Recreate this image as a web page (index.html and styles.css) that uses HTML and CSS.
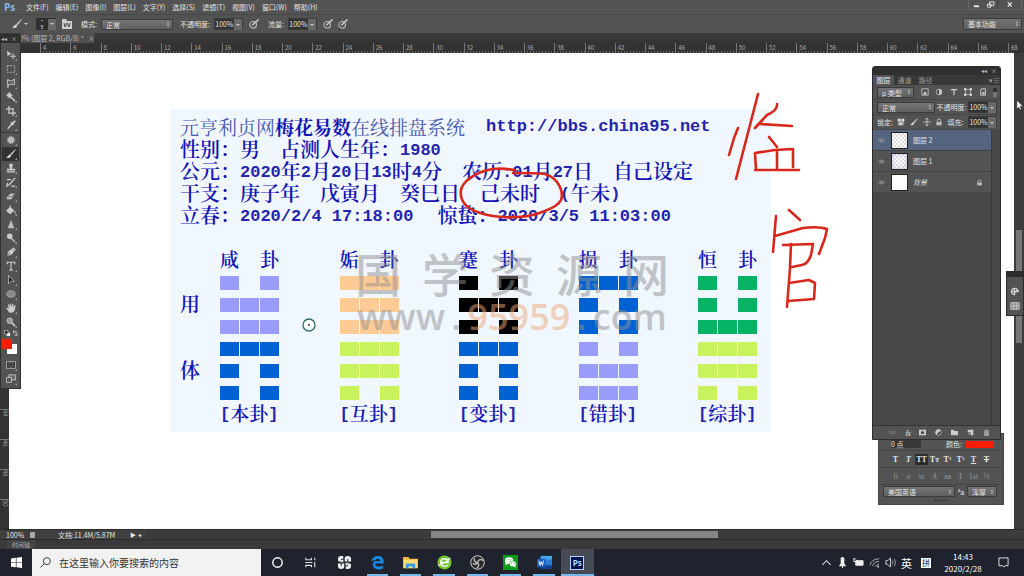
FILE: index.html
```html
<!DOCTYPE html>
<html lang="zh-CN">
<head>
<meta charset="utf-8">
<title>图层 2</title>
<link rel="stylesheet" href="styles.css">
</head>
<body>
<svg class="defs" aria-hidden="true">
  <symbol id="brush" viewBox="0 0 12 12"><path d="M11.5.5 5.5 6l1 1.2z" fill="#ddd" stroke="#ddd" stroke-width=".6"/><path d="M5 6.500c-2 0-2 2-4.500 4 3 .7 5.500 0 5.800-2.600z" fill="#ddd"/></symbol>
  <symbol id="eye" viewBox="0 0 12 12"><path d="M.5 6Q6 .5 11.500 6 6 11.500.5 6z" fill="none" stroke="#999" stroke-width="1.200"/><circle cx="6" cy="6" r="2" fill="#999"/></symbol>
  <symbol id="lock" viewBox="0 0 12 12"><path d="M3.500 6V4a2.500 2.500 0 0 1 5 0v2" fill="none" stroke="#ccc" stroke-width="1.300"/><path d="M2 6h8v5H2z" fill="#bbb"/></symbol>
  <symbol id="pressure" viewBox="0 0 12 12"><circle cx="5" cy="7" r="4" fill="none" stroke="#bbb" stroke-width="1.300"/><path d="M11.500.5 4 7.500" stroke="#ccc" stroke-width="1.800"/></symbol>
</svg>

<header class="menubar">
  <span class="logo">Ps</span>
  <nav class="menus">
    <button>文件(F)</button><button>编辑(E)</button><button>图像(I)</button><button>图层(L)</button><button>文字(Y)</button><button>选择(S)</button><button>滤镜(T)</button><button>视图(V)</button><button>窗口(W)</button><button>帮助(H)</button>
  </nav>
  <div class="window-buttons">
    <button aria-label="最小化"><svg viewBox="0 0 10 8"><path d="M2 6h6" stroke="#eee" stroke-width="2"/></svg></button>
    <button aria-label="还原"><svg viewBox="0 0 10 8"><path d="M4 1h5v4H4zM1.500 3.500h4v3.500h-4z" fill="#555" stroke="#eee"/></svg></button>
    <button aria-label="关闭"><svg viewBox="0 0 10 8"><path d="m3 1.500 4.500 5m0-5-4.500 5" stroke="#eee" stroke-width="1.300"/></svg></button>
  </div>
</header>

<div class="options">
  <button class="tool-preset" aria-label="画笔工具"><svg class="ico"><use href="#brush"/></svg><i class="caret"></i></button>
  <button class="size" aria-label="画笔大小"><b>•<br>5</b><i class="caret"></i></button>
  <button class="plain" aria-label="画笔面板"><svg class="ico" viewBox="0 0 10 10"><path d="M0 0h4l1 2h5v8H0z" fill="#ccc"/><path d="m2 4 1 4 2-4 2 4 1-4" fill="none" stroke="#444"/></svg></button>
  <label for="mode">模式:</label>
  <select id="mode" class="mode"><option>正常</option></select>
  <label for="opacity">不透明度:</label>
  <span class="combo"><input id="opacity" value="100%"><i class="caret"></i></span>
  <button class="plain" aria-label="不透明度压力"><svg class="ico"><use href="#pressure"/></svg></button>
  <label for="flow">流量:</label>
  <span class="combo"><input id="flow" value="100%"><i class="caret"></i></span>
  <button class="plain" aria-label="喷枪"><svg class="ico"><use href="#pressure"/></svg></button>
  <span class="rule"></span>
  <button class="plain" aria-label="大小压力"><svg class="ico"><use href="#pressure"/></svg></button>
  <select class="workspace-select" aria-label="工作区"><option>基本功能</option></select>
</div>

<div class="tabs"><button class="tab">0% (图层 2, RGB/8) *<span>×</span></button></div>

<div class="ruler">
  <span>4</span><span>6</span><span>8</span><span>10</span><span>12</span><span>14</span><span>16</span><span>18</span><span>20</span><span>22</span><span>24</span><span>26</span><span>28</span><span>30</span><span>32</span><span>34</span><span>36</span><span>38</span><span>40</span><span>42</span><span>44</span><span>46</span><span>48</span><span>50</span><span>52</span><span>54</span><span>56</span><span>58</span><span>60</span><span>62</span><span>64</span><span>66</span><span class="end">68</span><i></i>
</div>

<main class="editor">
  <div class="vruler"><span>42</span><span>44</span><span>46</span><span>48</span><span>50</span></div>
  <div class="canvas">
    <section class="sheet">
      <p class="title">元亨利贞网<b>梅花易数</b>在线排盘系统<a href="#">http://bbs.china95.net</a></p>
      <p><span>性别：男</span><span>占测人生年：<kbd>1980</kbd></span></p>
      <p><span>公元：<kbd>2020</kbd>年<kbd>2</kbd>月<kbd>20</kbd>日<kbd>13</kbd>时<kbd>4</kbd>分</span><span>农历<kbd>:01</kbd>月<kbd>27</kbd>日</span><span>自己设定</span></p>
      <p><span>干支：庚子年</span><span>戊寅月</span><span>癸巳日</span><span>己未时</span><span><kbd>(</kbd>午未<kbd>)</kbd></span></p>
      <p class="terms"><span>立春：<kbd>2020/2/4 17:18:00</kbd></span><span>惊蛰：<kbd>2020/3/5 11:03:00</kbd></span></p>
      <div class="chart">
        <div class="sides"><span>用</span><span>体</span></div>
        <div class="gua">
          <h2><span>咸</span><span>卦</span></h2>
          <div class="yao violet"><i></i><i></i></div><div class="yao violet"><i></i><i></i><i></i></div><div class="yao violet"><i></i><i></i><i></i></div>
          <div class="yao blue"><i></i><i></i><i></i></div><div class="yao blue"><i></i><i></i></div><div class="yao blue"><i></i><i></i></div>
          <footer><kbd>[</kbd>本卦<kbd>]</kbd></footer>
        </div>
        <div class="gua">
          <h2><span>姤</span><span>卦</span></h2>
          <div class="yao peach"><i></i><i></i><i></i></div><div class="yao peach"><i></i><i></i><i></i></div><div class="yao peach"><i></i><i></i><i></i></div>
          <div class="yao lime"><i></i><i></i><i></i></div><div class="yao lime"><i></i><i></i><i></i></div><div class="yao lime"><i></i><i></i></div>
          <footer><kbd>[</kbd>互卦<kbd>]</kbd></footer>
        </div>
        <div class="gua">
          <h2><span>蹇</span><span>卦</span></h2>
          <div class="yao black"><i></i><i></i></div><div class="yao black"><i></i><i></i><i></i></div><div class="yao black"><i></i><i></i></div>
          <div class="yao blue"><i></i><i></i><i></i></div><div class="yao blue"><i></i><i></i></div><div class="yao blue"><i></i><i></i></div>
          <footer><kbd>[</kbd>变卦<kbd>]</kbd></footer>
        </div>
        <div class="gua">
          <h2><span>损</span><span>卦</span></h2>
          <div class="yao blue"><i></i><i></i><i></i></div><div class="yao blue"><i></i><i></i></div><div class="yao blue"><i></i><i></i></div>
          <div class="yao violet"><i></i><i></i></div><div class="yao violet"><i></i><i></i><i></i></div><div class="yao violet"><i></i><i></i><i></i></div>
          <footer><kbd>[</kbd>错卦<kbd>]</kbd></footer>
        </div>
        <div class="gua">
          <h2><span>恒</span><span>卦</span></h2>
          <div class="yao green"><i></i><i></i></div><div class="yao green"><i></i><i></i></div><div class="yao green"><i></i><i></i><i></i></div>
          <div class="yao lime"><i></i><i></i><i></i></div><div class="yao lime"><i></i><i></i><i></i></div><div class="yao lime"><i></i><i></i></div>
          <footer><kbd>[</kbd>综卦<kbd>]</kbd></footer>
        </div>
      </div>
      <div class="watermark"><div class="wm-name"><span>国</span><span>学</span><span>资</span><span>源</span><span>网</span></div><div class="wm-url"><span>www</span><span>.</span><em>95959</em><span>.</span><span>com</span></div></div>
      <svg class="ink" viewBox="170 109 601 323" aria-hidden="true">
        <g fill="none" stroke="#d8281c" stroke-width="2.600" stroke-linecap="round" stroke-linejoin="round">
          <path d="M515 170Q503 168 493 169 480 171 470 178 462 184 461 190 460 198 464 203 470 212 493 216 505 218 517 217 530 217 545 211 558 206 561 200 564 192 557 182 552 176 545 174 535 173 513 173"/>
          <path d="m738 128-4 10-5 17M758 94 736 179M777 104q1 6-10 11l-12 13M760 124l32 2M769 137l8 10M755 153l1 17M755 153l20-3 18-1 0 18M777 150v18M755 170h44"/>
          <path d="m789 210 11 10M776 216l-3 36M775 236l28-8q16-2 24 1l-2 9-6 16M791 244l-1 24-3 39M783 245l30-1-2 11q-3 9-9 10l-10 2M789 283l20-3 6 3-1 16-26 2"/>
        </g>
        <circle cx="309" cy="325" r="6" fill="#fff" stroke="#287068" stroke-width="1.300"/><circle cx="309" cy="325" r="1" fill="#333"/>
      </svg>
    </section>
  </div>
  <div class="vscroll"><i></i></div>

  <aside class="toolbox" aria-label="工具">
    <div class="box-head"><span>◂◂</span><span>×</span></div>
    <button aria-label="移动"><svg viewBox="0 0 12 12"><path d="m1 1 6 4-3 .5L2 8z" fill="#ccc"/><path d="M8.500 4v7M5 7.500h7" stroke="#ccc" stroke-width="1.200"/></svg></button>
    <button aria-label="选框"><svg viewBox="0 0 12 12"><path d="M1.500 2h9v8h-9z" fill="none" stroke="#ccc" stroke-dasharray="2 1.500"/></svg></button>
    <button aria-label="套索"><svg viewBox="0 0 12 12"><path d="m2 2 5 2 3-3v7L6 7l-4 2zM3 8l-1 4" fill="none" stroke="#ccc" stroke-width="1.200"/></svg></button>
    <button aria-label="魔棒"><svg viewBox="0 0 12 12"><circle cx="4" cy="4" r="2.700" fill="#ccc"/><path d="m5 5 6 6" stroke="#ccc" stroke-width="1.800"/><path d="M4 0v8M0 4h8" stroke="#ccc"/></svg></button>
    <button aria-label="裁剪"><svg viewBox="0 0 12 12"><path d="M3.500 0v8.500H12M0 3.500h8.500V12" fill="none" stroke="#ccc" stroke-width="1.500"/></svg></button>
    <button aria-label="吸管"><svg viewBox="0 0 12 12"><path d="m8 4-6 6.500" stroke="#ccc" stroke-width="1.800"/><path d="m6 3 3 3M8 4l3-3" stroke="#ccc" stroke-width="2.400"/></svg></button>
    <hr>
    <button aria-label="修复"><svg viewBox="0 0 12 12"><circle cx="6" cy="6" r="3.500" fill="#bbb" stroke="#bbb" stroke-width="2.500" stroke-dasharray="1.700 1"/></svg></button>
    <button class="on" aria-label="画笔"><svg><use href="#brush"/></svg></button>
    <button aria-label="图章"><svg viewBox="0 0 12 12"><path d="M4 1h4v3L7 7h4v2H1V7h4L4 4zM1 10h10v1.500H1z" fill="#ccc"/></svg></button>
    <button aria-label="历史画笔"><svg viewBox="0 0 12 12"><path d="M11 1 5 8l-4 3 1-4M1 3h5M6 11h5" fill="none" stroke="#ccc" stroke-width="1.500"/></svg></button>
    <button aria-label="橡皮擦"><svg viewBox="0 0 12 12"><path d="m1 7 5-4h5L7 8v2H1z" fill="#ccc"/><path d="M1 7h5l4-4" fill="none" stroke="#555"/></svg></button>
    <button aria-label="油漆桶"><svg viewBox="0 0 12 12"><path d="m5 2 5 5-5 4-5-4z" fill="#ccc"/><path d="M5 0v6m5 1q2 1 1 4" fill="none" stroke="#ccc"/></svg></button>
    <button aria-label="锐化"><svg viewBox="0 0 12 12"><path d="m6 1 4 10H2z" fill="#bbb"/></svg></button>
    <button aria-label="减淡"><svg viewBox="0 0 12 12"><circle cx="4.500" cy="4" r="3.300" fill="#ccc"/><path d="m6 6 5 5" stroke="#ccc" stroke-width="1.500"/></svg></button>
    <button aria-label="钢笔"><svg viewBox="0 0 12 12"><path d="m1 11 2-6 4-3 3 3-3 4z" fill="#ccc"/><path d="m8 1 3 3" stroke="#ccc" stroke-width="2"/><path d="m1 11 4-4" stroke="#555"/></svg></button>
    <button aria-label="文字"><svg viewBox="0 0 12 12"><path d="M1.500 4V1.500h9V4M6 1.500V11M4 11h4" fill="none" stroke="#ccc" stroke-width="1.400"/></svg></button>
    <button aria-label="路径选择"><svg viewBox="0 0 12 12"><path d="m3 .5 7 7-4 0-3 3z" fill="#222" stroke="#bbb"/></svg></button>
    <button aria-label="椭圆"><svg viewBox="0 0 12 12"><ellipse cx="6" cy="6" rx="5" ry="4" fill="#888" stroke="#aaa"/></svg></button>
    <button aria-label="抓手"><svg viewBox="0 0 12 12"><path d="M4 11 .8 6l3 1L3 2l2 4V1l2 5 1-5 1 5 2-3-1 6-2 2z" fill="#ccc" stroke="#ccc"/></svg></button>
    <button aria-label="缩放"><svg viewBox="0 0 12 12"><circle cx="4.500" cy="4.500" r="3.300" fill="#999" stroke="#ccc"/><path d="m7 7 4 4" stroke="#ccc" stroke-width="2"/></svg></button>
    <button class="mini" aria-label="切换颜色"><svg viewBox="0 0 16 8"><path d="M3 3h4v4H3z" fill="#eee"/><path d="M.5.5h4v4h-4z" fill="#222" stroke="#aaa"/><path d="M11 2h3v4m-3-6v4m1 1 2 2 2-2" fill="none" stroke="#ccc"/></svg></button>
    <div class="swatches"><i class="bg"></i><i class="fg"></i></div>
    <button aria-label="快速蒙版"><svg viewBox="0 0 12 12"><path d="M.5 2h11v8H.5z" fill="#333" stroke="#bbb"/><circle cx="6" cy="6" r="2.500" fill="none" stroke="#bbb" stroke-dasharray="1 1"/></svg></button>
    <button aria-label="屏幕模式"><svg viewBox="0 0 12 12"><path d="M3.500 1h8v6h-8z" fill="#666" stroke="#ccc"/><path d="M.5 4h6v6h-6z" fill="#555" stroke="#ccc"/></svg></button>
  </aside>

  <aside class="charpanel" aria-label="字符">
    <div class="color-row"><span class="tiny-field">0 点</span><span class="tiny-label">颜色:</span><i></i></div>
    <div class="type-row"><button>T</button><button><em>T</em></button><button class="on">TT</button><button>Tᴛ</button><button>T<sup>1</sup></button><button>T<sub>1</sub></button><button><u>T</u></button><button><s>T</s></button></div>
    <div class="type-row dim"><button>fi</button><button><em>σ</em></button><button>st</button><button><em>A</em></button><button>aa</button><button>T</button><button>1st</button><button>½</button></div>
    <div class="lang-row"><select aria-label="语言"><option>美国英语</option></select><span>ªa</span><select aria-label="消除锯齿"><option>浑厚</option></select></div>
    <div class="grip"></div>
  </aside>

  <aside class="layers" aria-label="图层">
    <div class="box-head"><span>◂◂</span><span>×</span></div>
    <div class="panel-tabs"><button class="on">图层</button><button>通道</button><button>路径</button><span>▾≡</span></div>
    <div class="row filter"><select aria-label="筛选"><option>ρ 类型</option></select>
      <svg viewBox="0 0 10 10"><path d="M1 1h8v8H1z" fill="none" stroke="#ccc"/><path d="m2 8 3-4 3 4z" fill="#ccc"/></svg>
      <svg viewBox="0 0 10 10"><circle cx="5" cy="5" r="3.500" fill="#444" stroke="#ccc"/><path d="M5 1.500a3.500 3.500 0 0 1 0 7z" fill="#ccc"/></svg>
      <svg viewBox="0 0 10 10"><path d="M1 2h8M5 2v7" stroke="#ccc" stroke-width="1.500"/></svg>
      <svg viewBox="0 0 10 10"><path d="M2 2h6v6H2z" fill="none" stroke="#bbb"/><path d="M0 0h3v3H0zM7 0h3v3H7zM0 7h3v3H0zM7 7h3v3H7z" fill="#ccc"/></svg>
      <svg viewBox="0 0 10 10"><path d="M3 1h5v8H2V4z" fill="none" stroke="#ccc" stroke-width="1.200"/><path d="M4 5h3v3H4z" fill="#ccc"/></svg>
      <i class="switch"></i></div>
    <div class="row"><select class="blend" aria-label="混合模式"><option>正常</option></select><label for="lop">不透明度:</label><span class="combo"><input id="lop" value="100%"><i class="caret"></i></span></div>
    <div class="row locks"><span>锁定:</span>
      <svg viewBox="0 0 10 10"><path d="M1 1h8v8H1z" fill="#999"/><path d="M1 1h3v3H1zm5 0h3v3H6zM3 6h3v3H3z" fill="#ddd"/></svg>
      <svg><use href="#brush"/></svg>
      <svg viewBox="0 0 10 10"><path d="M5 0v10M0 5h10M3 2l2-2 2 2M3 8l2 2 2-2" fill="none" stroke="#ccc"/></svg>
      <svg><use href="#lock"/></svg>
      <label for="fill">填充:</label><span class="combo"><input id="fill" value="100%"><i class="caret"></i></span></div>
    <ul>
      <li class="on"><svg><use href="#eye"/></svg><i class="thumb checker"></i><span>图层 2</span></li>
      <li><svg><use href="#eye"/></svg><i class="thumb checker tint"></i><span>图层 1</span></li>
      <li><svg><use href="#eye"/></svg><i class="thumb"></i><em>背景</em><svg class="lk"><use href="#lock"/></svg></li>
    </ul>
    <div class="layer-foot">
      <button aria-label="链接"><svg viewBox="0 0 10 10"><path d="M0 3.500h4v3H0zm6 0h4v3H6zM3 5h4" fill="none" stroke="#777"/></svg></button>
      <button aria-label="样式"><em>fx</em></button>
      <button aria-label="蒙版"><svg viewBox="0 0 10 10"><path d="M0 1h10v8H0z" fill="#ccc"/><circle cx="5" cy="5" r="2.300" fill="#444"/></svg></button>
      <button aria-label="调整"><svg viewBox="0 0 10 10"><circle cx="5" cy="5" r="4" fill="#444" stroke="#ccc"/><path d="M2 8A4 4 0 0 1 8 2z" fill="#ccc"/></svg></button>
      <button aria-label="新建组"><svg viewBox="0 0 10 10"><path d="M0 1h4l1 2h5v6H0z" fill="#ccc"/></svg></button>
      <button aria-label="新建图层"><svg viewBox="0 0 10 10"><path d="M1 1h8v8H5L1 5z" fill="#ccc"/><path d="M1 5h4v4" fill="none" stroke="#555"/></svg></button>
      <button aria-label="删除"><svg viewBox="0 0 10 10"><path d="M1 2h8M4 1h2M2 3.500h6v6H2z" fill="#999" stroke="#aaa"/></svg></button>
    </div>
  </aside>

  <aside class="dock" aria-label="折叠面板">
    <button aria-label="颜色"><svg viewBox="0 0 12 12"><path d="M6 1a5 4.500 0 1 0 0 9q1-1 0-2 0-2 5-2-1-5-5-5z" fill="#ccc"/><path d="M3 4h1.500M6 3h1.500M3 7h1.500" stroke="#444" stroke-width="1.500"/></svg></button>
    <button aria-label="色板"><svg viewBox="0 0 12 12"><path d="M1 2h10v8H1zM1 6h10M4.500 2v8M8 2v8" fill="#888" stroke="#ccc"/></svg></button>
  </aside>
  <svg class="pointer" viewBox="0 0 8 12" aria-hidden="true"><path d="M1 0v10l2-2 2 3 1-1-1.500-3H8z" fill="#fff" stroke="#222" stroke-width=".5"/></svg>
</main>

<div class="status"><span class="pct">100%</span><i></i><span class="doc">文档:11.4M/5.87M</span><span class="play">▶</span><span class="play">◂</span><div class="hscroll"><b></b></div></div>
<div class="timeline"><button>时间轴</button></div>

<footer class="taskbar">
  <button class="start" aria-label="开始"><svg viewBox="0 0 12 12"><path d="m0 1.700 5.300-.8v4.800H0zM6 .8 12 0v5.700H6zM0 6.400h5.300v4.800L0 10.500zM6 6.400h6V12l-6-.8z" fill="#fff"/></svg></button>
  <label class="search"><svg viewBox="0 0 12 12"><circle cx="7.500" cy="4.500" r="3.800" fill="none" stroke="#333"/><path d="M4.800 7.200.5 11.500" stroke="#333"/></svg><input placeholder="在这里输入你要搜索的内容" aria-label="搜索"></label>
  <nav class="apps">
    <button aria-label="Cortana"><svg viewBox="0 0 16 16"><circle cx="8" cy="8" r="5" fill="none" stroke="#fff" stroke-width="1.500"/></svg></button>
    <button aria-label="任务视图"><svg viewBox="0 0 16 16"><path d="M3 3v2h6V3M3 13v-2h6v2M2.500 8H10M12.500 3v2.500m0 2V13" fill="none" stroke="#ddd" stroke-width="1.200"/></svg></button>
    <button aria-label="浏览器"><svg viewBox="0 0 16 16"><g fill="none" stroke="#eee" stroke-width="3"><path d="M7 2.500H4.500a2 2 0 0 0 0 4H7M13.500 7V4.500a2 2 0 0 0-4 0V7M9 13.500h2.500a2 2 0 0 0 0-4H9M2.500 9v2.500a2 2 0 0 0 4 0V9"/></g><path d="m7 1 1 7-7-1m14 2-7-1 1 7" fill="none" stroke="#20242f" stroke-width=".8"/></svg></button>
    <button class="open" aria-label="Edge"><svg viewBox="0 0 16 16"><path d="M1.500 7C2 3 5 1 8.500 1 13 1 15 4 14.800 9H5.500c.2 4 5 4 8.300 2.300v3C9 17 3.500 15 3 10.500c0-2.500 1.500-4 3.500-5C4.500 5.300 2.500 6 1.500 7zm4.200-.5h5.200C11 3 6 3 5.700 6.500z" fill="#1686e0"/></svg></button>
    <button class="open" aria-label="资源管理器"><svg viewBox="0 0 16 16"><path d="M0 2h6l1 2h9v10H0z" fill="#f0b93b"/><path d="M1 5h14v9H1z" fill="#ffdc75"/><path d="M3 14V9h10v5h-3v-2H6v2z" fill="#3b9be2"/></svg></button>
    <button class="open" aria-label="安全浏览器"><svg viewBox="0 0 16 16"><circle cx="8" cy="8" r="7.500" fill="#6fc52d"/><path d="M4 8h8Q12 4 8 4T4 8q0 4 4 4 2.500 0 4-1.500M1 11Q9 9 14 3" fill="none" stroke="#fff" stroke-width="1.400"/></svg></button>
    <button class="open" aria-label="OBS"><svg viewBox="0 0 16 16"><circle cx="8" cy="8" r="7.200" fill="#282828" stroke="#ddd"/><path d="M8 8Q3 7 5 3m3 5q2-5 6-2M8 8q3 4-1 6M8 8q-2 3-5 1" fill="none" stroke="#bbb" stroke-width="1.500"/></svg></button>
    <button class="open" aria-label="微信"><svg viewBox="0 0 16 16"><path d="M0 0h16v16H0z" fill="#0a9c19"/><ellipse cx="6.500" cy="6" rx="4.500" ry="3.700" fill="#fff"/><path d="m3 8-.5 3L6 9z" fill="#fff"/><ellipse cx="10.500" cy="9.500" rx="3.700" ry="3" fill="#fff" stroke="#0a9c19" stroke-width=".6"/><path d="m11 12 2.500 1.500-.3-3z" fill="#fff"/><path d="M5 5h.8M8 5h.8M9 9h.8M11.500 9h.8" stroke="#0a9c19"/></svg></button>
    <button class="open" aria-label="Word"><svg viewBox="0 0 16 16"><path d="M4 1h12v14H4z" fill="#2b7cd3"/><path d="M4 1h12v4H4z" fill="#41a5ee"/><path d="M4 11h12v4H4z" fill="#103f91"/><path d="M0 4h9v9H0z" fill="#185abd"/><path d="m2 6 1.200 5 1.300-4 1.300 4L7 6" fill="none" stroke="#fff"/></svg></button>
    <button class="open active" aria-label="Photoshop"><span>Ps</span></button>
  </nav>
  <div class="tray">
    <svg viewBox="0 0 12 12"><path d="m1.500 8.500 4.500-4.500 4.500 4.500" fill="none" stroke="#ddd" stroke-width="1.200"/></svg>
    <svg viewBox="0 0 12 12"><path d="M4 1q2-2 4 0v6l2 3H2l2-3z" fill="#eee"/><path d="M6 9v3" stroke="#eee"/></svg>
    <svg viewBox="0 0 12 12"><path d="M0 2h3m-2 0v3h3V3" stroke="#eee" fill="none"/><path d="M3 4h8v5H3z" fill="#eee" stroke="#eee"/></svg>
    <svg viewBox="0 0 12 12"><path d="M1 9Q3 2 11 2M4 10q1-5 7-5M7 10.500Q8 8 11 8" fill="none" stroke="#bbb"/><circle cx="10" cy="10.500" r="1" fill="#ddd"/></svg>
    <svg viewBox="0 0 12 12"><path d="M1 4h2l3-3v10L3 8H1z" fill="none" stroke="#ddd"/><path d="M8 4q1.500 2 0 4m2-6q3 4 0 8" fill="none" stroke="#aaa"/></svg>
    <span class="ime">英</span>
    <span class="pin">拼</span>
    <time>14:43<br>2020/2/28</time>
    <button aria-label="通知"><svg viewBox="0 0 12 12"><path d="M1 1h10v8.500H8L6.500 11 5 9.500H1z" fill="none" stroke="#eee"/></svg></button>
  </div>
</footer>
</body>
</html>
```
FILE: styles.css
```css
* { box-sizing: border-box; }
body {
  margin: 0;
  height: 100vh;
  display: flex;
  flex-direction: column;
  overflow: hidden;
  background: #3a3a3a;
  color: #e4e4e4;
  font: 7px/10px "Noto Sans CJK SC", "Noto Sans", sans-serif;
}
button, input, select {
  font: inherit;
  color: inherit;
  border: 0;
  padding: 0;
  margin: 0;
  background: none;
  border-radius: 0;
}
button { display: flex; align-items: center; justify-content: center; white-space: nowrap; }
p, h2, ul { margin: 0; padding: 0; font-weight: inherit; }
svg { display: block; flex: none; }
.defs { position: absolute; width: 0; height: 0; }
select {
  appearance: none;
  height: 11px;
  padding: 0 10px 0 4px;
  border: 1px solid #3b3b3b;
  background: url("data:image/svg+xml,%3Csvg xmlns='http://www.w3.org/2000/svg' viewBox='0 0 6 8'%3E%3Cpath d='M1 3l2-2 2 2zM1 5l2 2 2-2z' fill='%23ddd'/%3E%3C/svg%3E") right 2px center / 4px 6px no-repeat, linear-gradient(#747474, #606060);
}
.caret { width: 8px; height: 11px; display: grid; place-items: center; background: #6a6a6a; }
.caret::after { content: ""; border: 2px solid transparent; border-top-color: #ccc; border-bottom: 0; }
.combo { display: flex; border: 1px solid #3b3b3b; height: 12px; }
.combo input { width: 19px; background: #333; text-align: center; }

.menubar { height: 14px; display: flex; align-items: center; background: #535353; }
.logo { width: 21px; padding-left: 4px; color: #86b7e6; font: bold 10px/14px "Open Sans", sans-serif; }
.menus { display: flex; gap: 7px; padding-left: 5px; }
.window-buttons { margin-left: auto; margin-right: 2px; display: flex; border: 1px solid #666; border-top: 0; height: 10px; align-self: flex-start; }
.window-buttons button { width: 14px; }
.window-buttons button:last-child { width: 24px; border-left: 1px solid #444; }
.window-buttons svg { width: 9px; height: 7px; }

.options {
  height: 19px;
  display: flex;
  align-items: center;
  gap: 4px;
  padding: 0 2px 0 12px;
  background: #535353;
  border-top: 1px solid #484848;
}
.ico { width: 10px; height: 10px; }
.tool-preset .caret { background: none; }
.size { background: #2e2e2e; margin-left: 2px; }
.size b { width: 12px; font: 5px/6px "Noto Sans", sans-serif; }
.plain { width: 14px; }
.options label { margin-left: 3px; }
.mode { width: 72px; }
.rule { width: 1px; height: 13px; background: #3b3b3b; }
.plain + .rule { margin-right: -8px; }
.workspace-select { margin-left: auto; width: 59px; height: 12px; }

.tabs { height: 10px; display: flex; padding-left: 20px; background: linear-gradient(#3c3c3c, #343434); }
.tab { width: 74px; background: #505050; gap: 4px; color: #bbb; font-size: 7px; }

.ruler {
  height: 10px;
  display: flex;
  padding-left: 40px;
  background: #333;
  color: #aaa;
  font-size: 6px;
}
.ruler span {
  flex: 1;
  width: 0;
  padding-left: 2px;
  line-height: 9px;
  border-left: 1px solid #777;
  background: repeating-linear-gradient(90deg, transparent 0 2px, #666 2px 3px) bottom / 100% 2px no-repeat;
}
.ruler .end { flex: 0 0 6px; }
.ruler > i { flex: 0 0 10px; }

.editor { flex: 1; min-height: 0; position: relative; display: flex; }
.vruler { width: 9px; background: #333; display: flex; flex-direction: column; justify-content: flex-end; color: #999; }
.vruler span { height: 30px; border-top: 1px solid #777; writing-mode: vertical-rl; font-size: 6px; line-height: 8px; }
.canvas { flex: 1; background: #fff; padding: 56px 0 0 161px; }
.vscroll { width: 10px; background: #3c3c3c; padding: 177px 2px 0; }
.vscroll i { display: block; height: 113px; background: #777; }

.sheet {
  position: relative;
  width: 601px;
  height: 323px;
  padding: 7px 10px 0;
  background: #f0f7ff;
  color: #1414b4;
  font: 600 20px/22px "Noto Serif CJK SC", "Noto Sans CJK SC", sans-serif;
}
.sheet p { display: flex; gap: 20px; height: 22px; white-space: nowrap; }
.sheet .title { gap: 0; font-size: 19px; font-weight: 400; color: #4a58b0; }
.title b { color: #1414b4; font-weight: 700; }
.sheet .terms { gap: 24px; }
.sheet kbd, .sheet a {
  font: bold 17px/18px "Liberation Mono", monospace;
  color: #2424ac;
  text-decoration: none;
}
.sheet kbd { vertical-align: 2px; }
.sheet a { margin-left: 21px; line-height: 22px; }
.chart { display: flex; padding: 22px 4px 0 0; }
.sides { width: 40px; padding-top: 45px; display: flex; flex-direction: column; gap: 44px; }
.gua { width: 59px; }
.gua + .gua { margin-left: auto; }
.gua h2 { display: flex; justify-content: space-between; font-size: 19px; line-height: 22px; height: 24px; }
.gua footer { font-size: 19px; line-height: 18px; height: 20px; white-space: nowrap; }
.yao { height: 22px; display: flex; align-items: center; justify-content: space-between; }
.yao i { width: 19px; height: 14px; }
.violet i { background: #999cf8; }
.blue i { background: #0062d2; }
.peach i { background: #ffcb94; }
.lime i { background: #c9f35c; }
.black i { background: #000; }
.green i { background: #06b263; }
.watermark { position: absolute; left: 185px; top: 138px; width: 314px; opacity: .5; color: #909090; }
.wm-name { display: flex; justify-content: space-between; font: 500 46px/50px "Noto Sans CJK SC", sans-serif; }
.wm-url { display: flex; justify-content: space-between; padding: 0 2px; font: 600 36px/40px "Open Sans", sans-serif; }
.wm-url em { font-style: normal; color: #efa878; }
.ink { position: absolute; inset: 0; width: 100%; height: 100%; overflow: visible; }

.box-head { display: flex; justify-content: flex-end; gap: 4px; height: 8px; padding-right: 3px; background: #303030; font-size: 6px; line-height: 8px; color: #bbb; }
.toolbox {
  position: absolute;
  left: 0;
  top: -19px;
  width: 21px;
  padding-bottom: 2px;
  background: #535353;
  border: 1px solid #303030;
  display: flex;
  flex-direction: column;
}
.toolbox .box-head { margin-bottom: 5px; }
.toolbox button { height: 14px; position: relative; margin: 0 1px; }
.toolbox button.on { background: #333; }
.toolbox button svg { width: 10px; height: 10px; }
.toolbox button:not(.mini)::after { content: ""; position: absolute; right: 2px; bottom: 1px; border: 1px solid #aaa; border-top-color: transparent; border-left-color: transparent; }
.toolbox hr { width: 100%; margin: 0; border: 0; border-top: 1px solid #3a3a3a; }
.toolbox .mini { height: 9px; }
.toolbox .mini svg { width: 16px; height: 7px; }
.swatches { display: grid; grid-template: repeat(3, 5px) / repeat(3, 5px); padding: 1px; height: 20px; }
.swatches .fg { grid-area: 1 / 1 / 3 / 3; background: #fb1c04; }
.swatches .bg { grid-area: 2 / 2 / 4 / 4; background: #fff; }

.layers {
  position: absolute;
  right: 23px;
  top: 13px;
  width: 129px;
  height: 374px;
  display: flex;
  flex-direction: column;
  background: #484848;
  border: 1px solid #2c2c2c;
  border-radius: 3px 3px 0 0;
}
.panel-tabs { display: flex; height: 10px; background: #383838; color: #999; }
.panel-tabs button { width: 21px; }
.panel-tabs .on { background: #535353; color: #eee; }
.panel-tabs span { margin-left: auto; }
.row { height: 15px; padding: 0 3px 0 4px; display: flex; align-items: center; justify-content: space-between; background: #535353; border-bottom: 1px solid #474747; }
.row svg { width: 8px; height: 8px; }
.filter select { width: 37px; }
.switch { width: 4px; height: 9px; background: linear-gradient(#333 50%, #777 50%); }
.blend { width: 58px; }
.layers ul { flex: 1; list-style: none; margin-right: 8px; border-right: 1px solid #3a3a3a; }
.layers li { height: 21px; display: flex; align-items: center; padding: 0 8px 0 5px; background: #535353; border-bottom: 1px solid #424242; }
.layers li.on { background: #56657f; }
.layers li svg { width: 7px; height: 7px; margin-right: 6px; }
.layers li .lk { margin: 0 0 0 auto; }
.thumb { width: 17px; height: 17px; background: #fff; border: 1px solid #222; margin-right: 5px; }
.checker { background: repeating-conic-gradient(#ddd 0 25%, #fff 0 50%) 0 0 / 4px 4px; }
.tint { background-color: #dde; box-shadow: inset 0 0 4px #b6bdea; }
.layer-foot { height: 14px; padding: 0 10px 0 16px; display: flex; justify-content: space-between; background: #535353; border-top: 1px solid #333; }
.layer-foot svg { width: 7px; height: 7px; }

.charpanel {
  position: absolute;
  right: 20px;
  top: 380px;
  width: 126px;
  background: #535353;
  border: 1px solid #444;
}
.color-row { height: 16px; padding: 6px 9px 2px 12px; display: flex; align-items: center; }
.tiny-field { width: 30px; background: #383838; line-height: 8px; }
.tiny-label { margin-left: auto; margin-right: 4px; }
.color-row i { width: 28px; height: 7px; background: #fb1c04; }
.type-row { height: 17px; padding: 0 10px; display: grid; grid-template-columns: repeat(8, 1fr); align-items: center; border-top: 1px solid #444; font: bold 8px/11px "Liberation Serif", serif; }
.type-row .on { background: #2c2c2c; }
.type-row sup, .type-row sub { font-size: 5px; line-height: 4px; }
.type-row.dim { color: #999; font-weight: normal; }
.lang-row { height: 14px; padding: 0 6px 0 4px; display: flex; align-items: center; justify-content: space-between; border-top: 1px solid #444; }
.lang-row select:first-child { width: 72px; }
.lang-row select:last-child { width: 30px; }
.grip { height: 4px; width: 12px; margin: 2px auto 0; border-top: 1px dotted #222; }

.dock { position: absolute; right: 0; top: 218px; width: 18px; padding: 8px 0 2px; background: #535353; border: 1px solid #2c2c2c; border-top-width: 6px; }
.dock button { width: 100%; height: 14px; }
.dock svg { width: 10px; height: 10px; }
.pointer { position: absolute; right: 1px; top: 47px; width: 7px; height: 11px; }

.status { height: 10px; display: flex; align-items: center; padding-left: 6px; border-top: 1px solid #2c2c2c; background: #404040; }
.status .pct { width: 24px; }
.status > i { width: 5px; height: 6px; background: #aaa; border-radius: 1px; }
.doc { margin-left: 23px; width: 72px; }
.play { width: 8px; font-size: 6px; }
.hscroll { flex: 1; height: 9px; padding: 1px 306px 1px 285px; background: #3c3c3c; }
.hscroll b { display: block; height: 7px; background: #858585; }
.timeline { height: 10px; padding-left: 7px; background: #3a3a3a; border-top: 1px solid #2c2c2c; }
.timeline button { height: 9px; padding: 0 5px; color: #aaa; background: #444; font-size: 6px; }

.taskbar { height: 27px; display: flex; background: #1f232e; color: #fff; }
.start { width: 32px; }
.start svg { width: 11px; height: 11px; }
.search { width: 229px; display: flex; align-items: center; gap: 8px; padding-left: 8px; background: #f2f2f2; }
.search svg { width: 11px; height: 11px; }
.search input { flex: 1; min-width: 0; font-size: 10px; line-height: 16px; color: #333; }
.search input::placeholder { color: #333; opacity: 1; }
.apps { display: grid; grid-template-columns: repeat(10, 1fr); width: 333px; }
.apps svg { width: 15px; height: 15px; }
.apps button { position: relative; }
.apps .open::after { content: ""; position: absolute; left: 6px; right: 6px; bottom: 0; height: 2px; background: #76b9ed; }
.apps .active { background: #474b56; }
.apps .active::after { left: 0; right: 0; }
.apps .active span { width: 14px; height: 14px; background: #041450; border: 1px solid #b4d2ff; color: #b9dcff; font: bold 8px/12px "Open Sans", sans-serif; }
.tray { margin-left: auto; display: flex; align-items: center; gap: 6px; padding-right: 16px; }
.tray svg { width: 11px; height: 11px; margin-right: -1px; }
.ime { font-size: 11px; line-height: 16px; }
.pin { width: 10px; height: 10px; margin: 0 3px; background: #fff; color: #1f232e; font-size: 8px; line-height: 10px; text-align: center; }
.tray time { width: 46px; margin-right: 6px; font-size: 8px; line-height: 12px; text-align: center; }
```
